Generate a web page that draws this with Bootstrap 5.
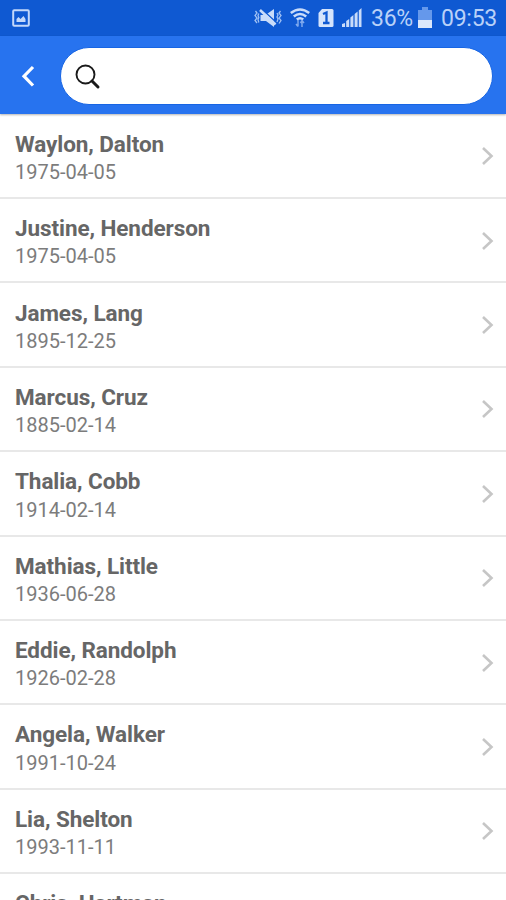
<!DOCTYPE html>
<html lang="en">
<head>
<meta charset="utf-8">
<meta name="viewport" content="width=device-width, initial-scale=1">
<title>People</title>
<link href="https://cdn.jsdelivr.net/npm/bootstrap@5.3.0/dist/css/bootstrap.min.css" rel="stylesheet">
<style>
body{font-family:Roboto,"Liberation Sans",sans-serif;height:900px}
svg{display:block;flex:none}
.status{height:36px;background:#0f59d2;color:#b9d1f8;font-size:23px;line-height:38px;padding:0 9px 0 12px}
.battery-label,.clock{letter-spacing:-.25px;padding-top:1px}
.battery-label{margin-left:9px}
.clock{margin-left:8px}
.topbar{height:78px;background:#2773ef;padding:1px 13px 0 20px;box-shadow:0 1px 2px rgba(0,0,0,.3);z-index:1}
.search{height:58px;background:#fff;border:1px solid #1765e4;padding-left:14px;margin-left:22px}
.search svg{margin-top:2px}
.search input{font-size:22px}
.people{height:786px}
.person{height:84.38px;padding:16.200px 12px 0 15px;background:linear-gradient(#e8e8e8,#e8e8e8) left bottom/100% 2px no-repeat}
.people .person:first-child{height:85px;padding-top:16.600px}
.person-name{font-size:22.5px;line-height:27px;font-weight:700;color:#666;letter-spacing:-.08px}
.person-date{font-size:20px;line-height:24px;color:#7c7c7c;margin-top:2.200px}
.people .person:last-child{padding-top:16px}
.arrow{margin-top:15.500px}
</style>
</head>
<body class="bg-white overflow-hidden d-flex flex-column">
<header class="status d-flex align-items-center flex-shrink-0">
<svg width="18" height="18" viewBox="0 0 18 18"><rect x="1.200" y="1.200" width="15.600" height="15.600" rx="1" fill="none" stroke="#c3d8fa" stroke-width="2"/><path d="M4.500 13V10l2-2 2 2 3-3 2 3v3z" fill="#c3d8fa"/></svg>
<div class="d-flex align-items-center ms-auto">
<svg width="28" height="20" viewBox="0 0 28 20" fill="#c9dcfa"><path d="M6.500 7h5L20 1v18l-8-6H6.500z"/><path d="M7 .5L24 16" stroke="#0f59d2" stroke-width="1.500"/><path d="M6 2l15.500 14.500" stroke="#c9dcfa" stroke-width="2.600"/><path d="M1.500 3l1.500 2-2 2.500 2 2.500-2 2.500 2 2.500M4.800 5.500l-.8 2 .8 2-.8 2 .8 3M26.500 3L25 5l2 2.500-2 2.500 2 2.500-2 3M23 5l1 2-1 2 1 2-1 3" fill="none" stroke="#9fc0f4" stroke-width="1.300"/></svg>
<svg width="20" height="20" viewBox="0 0 20 20" class="ms-2" fill="none" stroke="#c9dcfa" stroke-width="2.600"><path d="M.8 5Q10-2 19.200 5M3.800 8.500q6.200-5 12.400 0M6.800 11.500q3.200-2.500 6.400 0"/><path d="M8 12v6.500M6 16l2 2.500M12 19v-6.500M10.500 15l1.500-2.500 2 2.500" stroke="#7fa9ee" stroke-width="1.500"/></svg>
<svg width="16" height="20" viewBox="0 0 16 20" class="ms-2"><path d="M4 1h10q1.500 0 1.500 1.500v15q0 1.500-1.500 1.500H2Q.5 19 .5 17.500V5z" fill="#d5e4fc"/><path d="M5 6l3.500-1.500V15M5 15h6.500" fill="none" stroke="#0f59d2" stroke-width="2.300"/></svg>
<svg width="20" height="20" viewBox="0 0 20 20" class="ms-2" fill="#c9dcfa"><path d="M0 19v-3l3-1v4zM4.200 19v-6l3-2v8zM8.400 19V9.500l3-2.500v12zM12.600 19V6l3-2.500V19zM16.800 19V2.500L19.500 0v19z"/></svg>
<span class="battery-label">36%</span>
<svg width="16" height="22" viewBox="0 0 16 22" class="ms-1"><path d="M5 0h6v3h4v18H1V3h4z" fill="#6598eb"/><path d="M1 13h14v8H1z" fill="#dbe7fb"/></svg>
<span class="clock">09:53</span>
</div>
</header>
<nav class="topbar d-flex align-items-center flex-shrink-0 position-relative">
<svg width="18" height="24" viewBox="0 0 18 24"><path d="M13 3L4 12.200 13 21.500" fill="none" stroke="#fff" stroke-width="3.200"/></svg>
<div class="search rounded-pill d-flex align-items-center flex-grow-1">
<svg width="26" height="26" viewBox="0 0 26 26" fill="none" stroke="#1a1a1a"><circle cx="10.500" cy="10.500" r="9" stroke-width="1.900"/><path d="M17 17l6 6" stroke-width="3" stroke-linecap="round"/></svg>
<input class="form-control border-0 shadow-none bg-transparent" type="text" aria-label="Search">
</div>
</nav>
<main id="people" class="people flex-shrink-0 overflow-hidden"></main>
<script src="https://cdn.jsdelivr.net/npm/bootstrap@5.3.0/dist/js/bootstrap.bundle.min.js"></script>
<script>
const people=[["Waylon, Dalton","1975-04-05"],["Justine, Henderson","1975-04-05"],["James, Lang","1895-12-25"],["Marcus, Cruz","1885-02-14"],["Thalia, Cobb","1914-02-14"],["Mathias, Little","1936-06-28"],["Eddie, Randolph","1926-02-28"],["Angela, Walker","1991-10-24"],["Lia, Shelton","1993-11-11"],["Chris, Hartman",""]];
document.getElementById("people").innerHTML=people.map(([name,date])=>`<div class="person d-flex justify-content-between align-items-start"><div><div class="person-name">${name}</div>${date?`<div class="person-date">${date}</div>`:""}</div>${date?`<svg class="arrow" width="13" height="20" viewBox="0 0 13 20"><path d="M2 2l8.500 8L2 18" fill="none" stroke="#c6c6c6" stroke-width="2.600"/></svg>`:""}</div>`).join("");
</script>
</body>
</html>
